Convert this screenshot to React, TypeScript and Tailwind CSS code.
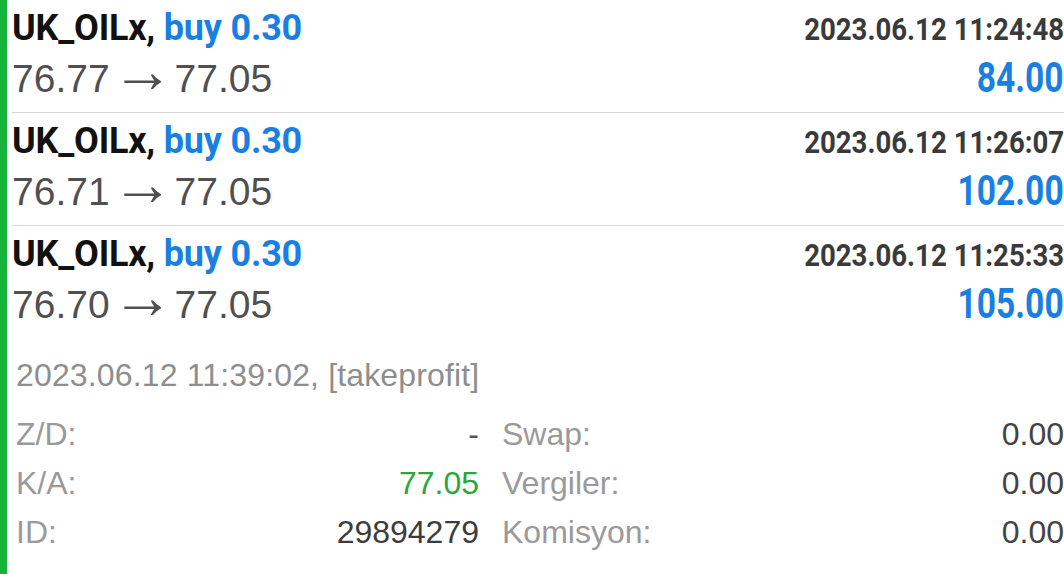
import React from "react";

const bold = { fontFamily: 'Roboto, "Liberation Sans", sans-serif' };
const reg = { fontFamily: '"Liberation Sans", Arial, sans-serif' };

type Deal = { open: string; time: string; profit: string };

const deals: Deal[] = [
  { open: "76.77", time: "2023.06.12 11:24:48", profit: "84.00" },
  { open: "76.71", time: "2023.06.12 11:26:07", profit: "102.00" },
  { open: "76.70", time: "2023.06.12 11:25:33", profit: "105.00" },
];

function Row({ d, last }: { d: Deal; last: boolean }) {
  return (
    <div className={`h-[113px] flex flex-col ${last ? "" : "border-b border-[#d6d6d6]"}`}>
      <div className="flex items-baseline justify-between h-[52px] pt-[4px]">
        <div className="text-[36px] font-bold leading-[48px] tracking-[-0.2px]" style={bold}>
          <span className="text-[#111]">UK_OILx, </span>
          <span className="text-[#1a7fe2]">buy 0.30</span>
        </div>
        <div
          className="inline-block origin-right scale-x-[0.89] text-[31px] font-bold leading-[48px] text-[#3a3a3a] whitespace-nowrap"
          style={bold}
        >
          {d.time}
        </div>
      </div>
      <div className="flex items-baseline justify-between h-[56px]">
        <div className="text-[39px] leading-[52px] text-[#505050] whitespace-nowrap" style={reg}>
          {d.open}
          <span className="inline-block ml-[2px] mr-[1px] text-[62px] leading-[34px]" style={reg}>
            →
          </span>
          77.05
        </div>
        <div
          className="inline-block origin-right scale-x-[0.8] text-[42px] font-bold leading-[52px] text-[#1a7fe2] whitespace-nowrap"
          style={bold}
        >
          {d.profit}
        </div>
      </div>
    </div>
  );
}

function Field({ label, value, color }: { label: string; value: string; color: string }) {
  return (
    <div className="flex items-center justify-between h-[49px]">
      <span className="text-[#9a9a9a]">{label}</span>
      <span className={color}>{value}</span>
    </div>
  );
}

export default function App() {
  return (
    <div className="flex w-[1064px] h-[574px] bg-white overflow-hidden">
      <div className="w-[7px] shrink-0 bg-[#16b33a]" />
      <div className="flex-1 pl-[5px] overflow-hidden">
        {deals.map((d, i) => (
          <Row key={i} d={d} last={i === deals.length - 1} />
        ))}
        <div className="pl-[4px] text-[32px]" style={reg}>
          <div className="h-[70px] flex items-center text-[#8e8e8e] pt-[2px] whitespace-nowrap tracking-[0.15px]">
            2023.06.12 11:39:02, [takeprofit]
          </div>
          <div className="grid grid-cols-[463px_1fr] gap-x-[23px]">
            <div className="flex flex-col">
              <Field label="Z/D:" value="-" color="text-[#555]" />
              <Field label="K/A:" value="77.05" color="text-[#2aa63b]" />
              <Field label="ID:" value="29894279" color="text-[#3c3c3c]" />
            </div>
            <div className="flex flex-col">
              <Field label="Swap:" value="0.00" color="text-[#444]" />
              <Field label="Vergiler:" value="0.00" color="text-[#444]" />
              <Field label="Komisyon:" value="0.00" color="text-[#444]" />
            </div>
          </div>
        </div>
      </div>
    </div>
  );
}
